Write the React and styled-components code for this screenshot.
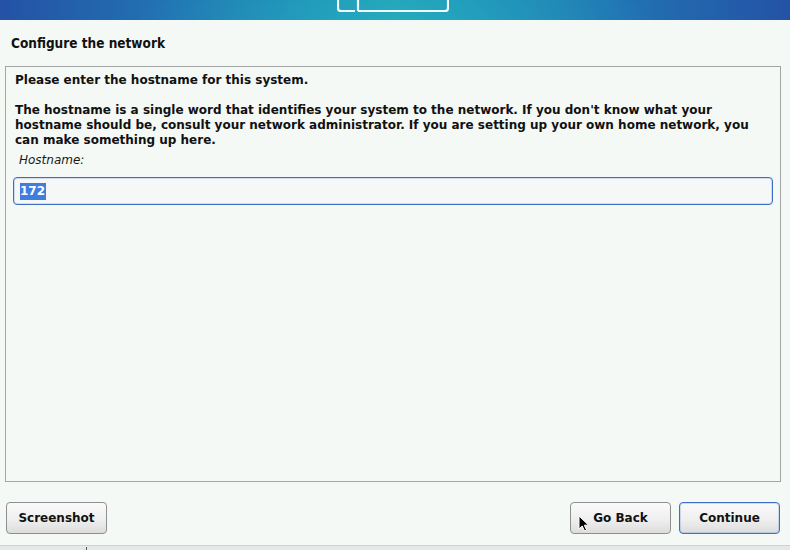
import React from "react";
import styled, { createGlobalStyle, css } from "styled-components";

const GlobalStyle = createGlobalStyle`
  html, body {
    margin: 0;
    padding: 0;
    background: #f5f9f6;
  }
  body {
    font-family: "DejaVu Sans", "Noto Sans", sans-serif;
    color: #111;
  }
`;

const App = () => {
  return (
    <>
      <GlobalStyle />
      <Page>
        <Banner>
          <BannerLogo width="112" height="13" viewBox="0 0 112 13">
            <path
              d="M1 0 V8 Q1 11 4 11 H18 M21 0 V11 M21 11 H108 Q111 11 111 8 V0"
              fill="none"
              stroke="#f4fbfb"
              strokeWidth="2.2"
            />
          </BannerLogo>
        </Banner>
        <Title>Configure the network</Title>
        <Panel>
          <Paragraph>Please enter the hostname for this system.</Paragraph>
          <Paragraph>
            The hostname is a single word that identifies your system to the
            network. If you don't know what your hostname should be, consult
            your network administrator. If you are setting up your own home
            network, you can make something up here.
          </Paragraph>
          <FieldLabel>Hostname:</FieldLabel>
          <Input>
            <Selected>172</Selected>
          </Input>
        </Panel>
        <ButtonRow>
          <Button>Screenshot</Button>
          <Spacer />
          <Button>
            Go Back
            <Cursor width="12" height="17" viewBox="0 0 12 17">
              <path
                d="M1 1 V14 L4.2 11 L6.6 16 L8.6 15 L6.3 10.2 H10.6 Z"
                fill="#000"
                stroke="#fff"
                strokeWidth="1"
              />
            </Cursor>
          </Button>
          <Button primary>Continue</Button>
        </ButtonRow>
        <StatusBar>
          <Tick />
        </StatusBar>
      </Page>
    </>
  );
};

export default App;

const Page = styled.div`
  width: 790px;
  height: 550px;
  display: flex;
  flex-direction: column;
  overflow: hidden;
`;

const Banner = styled.div`
  height: 20px;
  flex: none;
  display: flex;
  justify-content: center;
  background: radial-gradient(
      ellipse 260px 60px at 50% 100%,
      rgba(40, 180, 190, 0.55),
      rgba(40, 180, 190, 0) 100%
    ),
    linear-gradient(
      90deg,
      #2452a6 0%,
      #2174b3 22%,
      #1f95bb 42%,
      #21a0b9 50%,
      #1f95bb 58%,
      #2174b3 78%,
      #2452a6 100%
    );
`;

const BannerLogo = styled.svg`
  display: block;
  margin-left: -5px;
`;

const Title = styled.div`
  height: 46px;
  flex: none;
  display: flex;
  align-items: center;
  padding-left: 11px;
  font-family: "DejaVu Sans Condensed", "DejaVu Sans", sans-serif;
  font-weight: bold;
  font-size: 13.5px;
  color: #111;
`;

const Panel = styled.div`
  height: 416px;
  box-sizing: border-box;
  margin: 0 9px 0 5px;
  border: 1px solid #a4a6a5;
  padding: 6px 7px 0 9px;
  font-size: 12px;
  font-weight: bold;
  line-height: 15px;
`;

const Paragraph = styled.p`
  margin: 0 0 15px 0;
`;

const FieldLabel = styled.div`
  margin-top: -10px;
  padding-left: 4px;
  font-weight: normal;
  font-style: italic;
  font-size: 12px;
  color: #1a1a1a;
`;

const Input = styled.div`
  margin-top: 9px;
  height: 28px;
  box-sizing: border-box;
  margin-left: -2px;
  margin-right: 0;
  border: 1px solid #3c6fc4;
  border-radius: 4px;
  background: #f6f7f7;
  display: flex;
  align-items: center;
  padding-left: 6px;
  box-shadow: inset 0 0 0 1px rgba(90, 140, 220, 0.25);
`;

const Selected = styled.span`
  background: #3f7de1;
  color: #fff;
  font-weight: bold;
  font-size: 12px;
  line-height: 17px;
  padding: 0 1px 0 0;
`;

const ButtonRow = styled.div`
  display: flex;
  align-items: center;
  gap: 8px;
  padding: 20px 10px 0 6px;
  height: 32px;
  flex: none;
`;

const Spacer = styled.div`
  flex: 1;
`;

const Button = styled.div`
  position: relative;
  width: 101px;
  height: 32px;
  box-sizing: border-box;
  border: 1px solid #8e908f;
  border-radius: 4px;
  background: linear-gradient(180deg, #fafafa 0%, #efefef 55%, #dcdcdc 100%);
  display: flex;
  align-items: center;
  justify-content: center;
  font-size: 12px;
  font-weight: bold;
  color: #111;

  ${(props) =>
    props.primary &&
    css`
      border-color: #3d70c6;
      box-shadow: inset 0 0 0 1px rgba(120, 160, 230, 0.35);
    `}
`;

const Cursor = styled.svg`
  position: absolute;
  left: 7px;
  top: 12px;
`;

const StatusBar = styled.div`
  margin-top: auto;
  height: 4px;
  flex: none;
  position: relative;
  border-top: 1px solid #cfd2d0;
  background: #e6e8e7;
`;

const Tick = styled.div`
  position: absolute;
  left: 86px;
  top: 1px;
  width: 1px;
  height: 3px;
  background: #555;
`;
